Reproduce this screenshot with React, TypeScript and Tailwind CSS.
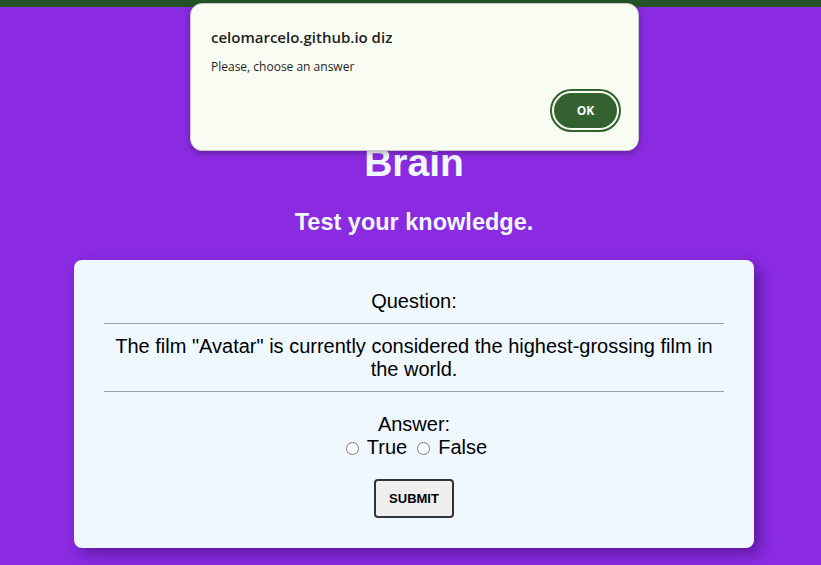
import React from "react";

export default function App() {
  return (
    <div className="relative min-h-screen bg-[#8a2be2] font-['Liberation_Sans',Arial,sans-serif]">
      <div className="h-[7px] bg-[#255226]" />
      <div className="pl-[7px] flex flex-col items-center">
        <h1 className="mt-[134px] text-[39px] leading-[44px] font-bold text-[#f0f8ff]">Brain</h1>
        <h2 className="mt-[24px] text-[23.5px] leading-[27px] font-bold text-[#f0f8ff]">Test your knowledge.</h2>
        <div className="mt-[24px] w-[680px] rounded-[8px] bg-[#f0f8ff] px-[30px] pt-[30px] pb-[30px] shadow-[6px_6px_14px_rgba(40,0,80,0.45)] flex flex-col items-center text-black">
          <p className="text-[20px] leading-[23px]">Question:</p>
          <hr className="w-full mt-[10px] border-t border-[#a0a0a0]" />
          <p className="mt-[11px] text-[20px] leading-[23px] text-center px-[6px]">
            The film "Avatar" is currently considered the highest-grossing film in the world.
          </p>
          <hr className="w-full mt-[10px] border-t border-[#a0a0a0]" />
          <p className="mt-[21px] text-[20px] leading-[23px]">Answer:</p>
          <div className="flex items-center text-[20px] leading-[23px]">
            <input type="radio" name="a" className="w-[13px] h-[13px] ml-[5px] mr-[3px] mt-[1px]" />
            <label className="ml-[5px]">True</label>
            <input type="radio" name="a" className="w-[13px] h-[13px] ml-[10px] mr-[3px] mt-[1px]" />
            <label className="ml-[5px]">False</label>
          </div>
          <button className="mt-[20px] w-[80px] h-[39px] rounded-[4px] border-2 border-[#333] bg-[#efefef] text-[13px] font-bold text-black">
            SUBMIT
          </button>
        </div>
      </div>

      <div className="absolute left-[190px] top-[3px] w-[449px] h-[148px] rounded-[12px] bg-[#f9fcf2] border border-[#c8c8c8] shadow-[0_2px_6px_rgba(0,0,0,0.3)] font-['Open_Sans','Noto_Sans',sans-serif]">
        <div className="pl-[20px] pt-[22px] text-[15px] leading-[22px] font-semibold text-[#1f1f1f]">celomarcelo.github.io diz</div>
        <div className="pl-[20px] mt-[10px] text-[12px] leading-[17px] text-[#1f1f1f]">Please, choose an answer</div>
        <div className="absolute right-[17px] bottom-[18px] w-[71px] h-[43px] rounded-full border-2 border-[#33612f] p-[2px]">
          <div className="w-full h-full rounded-full bg-[#33612f] flex items-center justify-center text-white text-[12px] font-bold">OK</div>
        </div>
      </div>
    </div>
  );
}
